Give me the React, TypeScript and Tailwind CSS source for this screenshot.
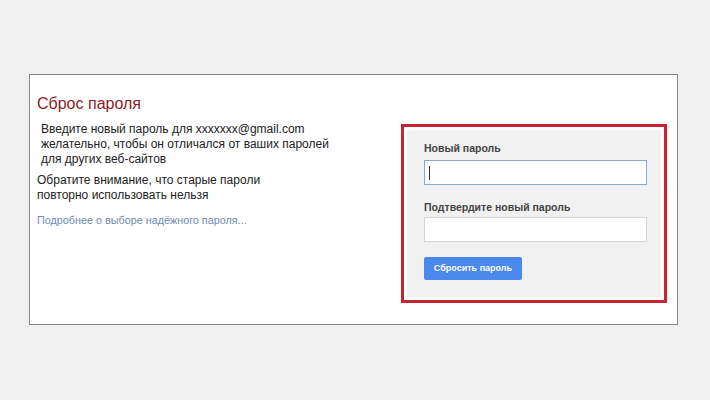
import React from 'react'

const App = () => {
    return (
        <div className="w-[710px] h-[400px] bg-[#f0f0f0] pt-[74px] pl-[29px] font-['Liberation_Sans',Arial,sans-serif]">
            <div className="w-[649px] h-[251px] bg-white border border-[#858585] flex">
                {/* left text */}
                <div className="w-[371px] pl-[7px] pt-[19px]">
                    <h1 className="text-[16px] leading-[20px] text-[#8e1b1b]">Сброс пароля</h1>
                    <p className="mt-[8px] ml-[4px] text-[12px] leading-[15px] text-[#222]">
                        Введите новый пароль для xxxxxxx@gmail.com<br />
                        желательно, чтобы он отличался от ваших паролей<br />
                        для других веб-сайтов
                    </p>
                    <p className="mt-[6px] text-[12px] leading-[15px] text-[#222]">
                        Обратите внимание, что старые пароли<br />
                        повторно использовать нельзя
                    </p>
                    <a className="block mt-[10px] text-[10.8px] leading-[14px] text-[#6d8cb3]">Подробнее о выборе надёжного пароля...</a>
                </div>

                {/* right form */}
                <div className="pt-[49px]">
                    <div className="w-[266px] h-[179px] border-[3px] border-[#c8242f] p-[3px]">
                        <div className="h-full bg-[#f1f1f1] pl-[17px] pr-[14px] pt-[11px]">
                            <label className="block text-[10.5px] leading-[14px] font-bold text-[#444]">Новый пароль</label>
                            <div className="mt-[5px] h-[25px] bg-white border border-[#8ca7cf] flex items-center pl-[4px]">
                                <span className="w-px h-[14px] bg-[#333]"></span>
                            </div>
                            <label className="block mt-[15px] text-[10.5px] leading-[14px] font-bold text-[#444]">Подтвердите новый пароль</label>
                            <div className="mt-[3px] h-[25px] bg-white border border-[#d6d6d6]"></div>
                            <button className="mt-[15px] w-[98px] h-[23px] rounded-[2px] bg-[#4a89ec] text-white text-[9px] font-bold">Сбросить пароль</button>
                        </div>
                    </div>
                </div>
            </div>
        </div>
    )
}

export default App
